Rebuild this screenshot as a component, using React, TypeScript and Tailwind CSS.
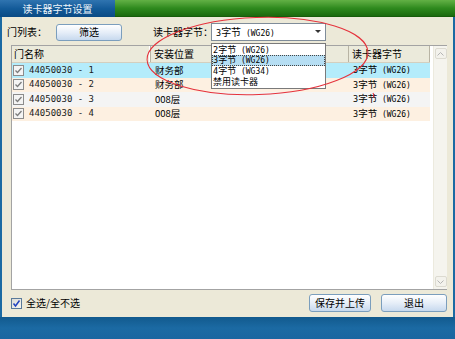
import React from "react";

const cjk = { fontFamily: '"Noto Sans CJK SC", "Liberation Sans", sans-serif' };
const mono = { fontFamily: '"DejaVu Sans Mono", "Liberation Mono", monospace' };

function RowCheck() {
  return (
    <div className="w-[11px] h-[11px] border border-[#8c8c8c] bg-[#f4f4f4] flex items-center justify-center">
      <svg width="9" height="9" viewBox="0 0 9 9">
        <path d="M1.5 4.5 L3.5 6.5 L7.5 2" fill="none" stroke="#7c7c7c" strokeWidth="1.3" />
      </svg>
    </div>
  );
}

function Wg({ d, n }: { d: string; n: string }) {
  return (
    <span className="whitespace-pre leading-none">
      <span className="text-[8.5px] leading-none" style={mono}>{d}</span>字节<span className="text-[8px] leading-none" style={mono}> (WG{n})</span>
    </span>
  );
}

const rows = [
  { name: "44050030 - 1", loc: "财务部", bg: "bg-[#b4ecfb]" },
  { name: "44050030 - 2", loc: "财务部", bg: "bg-[#fdf0e1]" },
  { name: "44050030 - 3", loc: "008层", bg: "bg-[#f4f4f4]" },
  { name: "44050030 - 4", loc: "008层", bg: "bg-[#fdf0e1]" },
];

export default function App() {
  return (
    <div
      className="relative w-[455px] h-[339px] overflow-hidden bg-[#ece9d8] flex flex-col text-black"
      style={cjk}
    >
      {/* top bar */}
      <div className="h-[17px] flex shrink-0">
        <div className="w-[115px] bg-gradient-to-b from-[#2f74b0] via-[#135b99] to-[#0a4a84] text-[#eef4fa] text-[10px] leading-none flex items-center justify-center">
          读卡器字节设置
        </div>
        <div className="flex-1 bg-gradient-to-b from-[#62b145] via-[#2f8b1e] to-[#1b6a0e] border-b border-[#175c0a]" />
      </div>

      {/* body */}
      <div className="flex-1 flex flex-col border-l-2 border-r-2 border-[#1b6aa3] pl-[5px] pr-[6px]">
        {/* toolbar */}
        <div className="mt-[6px] h-[18px] flex items-center text-[10px] leading-none whitespace-nowrap">
          <div className="w-[49px] shrink-0">门列表：</div>
          <button className="w-[66px] h-[17px] shrink-0 rounded-[3px] border border-[#7b9ebd] bg-gradient-to-b from-[#ffffff] via-[#e6eef8] to-[#c7d9ee] text-[10px] leading-none flex items-center justify-center">
            筛选
          </button>
          <div className="ml-[31px] w-[58px] shrink-0 overflow-visible">读卡器字节：</div>
          <div className="w-[115px] h-[18px] shrink-0 border border-[#7f8c99] bg-white flex items-center pl-[4px] pr-[4px]">
            <span className="flex-1 text-[10px]"><Wg d="3" n="26" /></span>
            <svg width="6" height="4" viewBox="0 0 6 4">
              <path d="M0 0 L6 0 L3 3 Z" fill="#333" />
            </svg>
          </div>
        </div>

        {/* table */}
        <div className="mt-[4px] ml-[4px] h-[245px] flex border-l border-t border-b border-[#a3a3a3] bg-white">
          <div className="flex-1 flex flex-col">
            <div className="h-[17px] flex text-[10px] leading-none bg-[#ebeadb] border-b border-[#d3cfbf] w-[418px]">
              <div className="w-[139px] flex items-center pl-[2px] border-r border-[#b8b4a4] shadow-[inset_-1px_0_0_#ffffff]">门名称</div>
              <div className="w-[198px] flex items-center pl-[3px] border-r border-[#b8b4a4]">安装位置</div>
              <div className="w-[81px] flex items-center pl-[3px] border-r border-[#b8b4a4]">读卡器字节</div>
            </div>
            {rows.map((r) => (
              <div key={r.name} className={`h-[14.5px] w-[418px] flex items-center text-[9.5px] leading-none ${r.bg}`}>
                <div className="w-[139px] flex items-center pl-[1px]">
                  <RowCheck />
                  <span className="ml-[5px] whitespace-pre text-[9px] text-[#222]" style={mono}>{r.name}</span>
                </div>
                <div className="w-[198px] pl-[4px]">{r.loc}</div>
                <div className="w-[81px] pl-[4px]"><Wg d="3" n="26" /></div>
              </div>
            ))}
          </div>
          {/* scrollbar */}
          <div className="w-[14px] bg-[#f5f4ee] border-l border-[#eceade] flex flex-col justify-between py-[2px] items-center">
            <div className="w-[12px] h-[11px] rounded-[2px] border border-[#dcdad0] bg-[#f3f2ec] flex items-center justify-center">
              <svg width="7" height="4" viewBox="0 0 7 4"><path d="M0.5 3.5 L3.5 0.5 L6.5 3.5" fill="none" stroke="#b4b4b4" strokeWidth="1" /></svg>
            </div>
            <div className="w-[12px] h-[11px] rounded-[2px] border border-[#dcdad0] bg-[#f3f2ec] flex items-center justify-center">
              <svg width="7" height="4" viewBox="0 0 7 4"><path d="M0.5 0.5 L3.5 3.5 L6.5 0.5" fill="none" stroke="#b4b4b4" strokeWidth="1" /></svg>
            </div>
          </div>
        </div>

        {/* bottom row */}
        <div className="mt-[4px] h-[18px] flex items-center text-[10px] leading-none">
          <div className="ml-[4px] w-[11px] h-[11px] border border-[#5a7a9a] bg-gradient-to-br from-[#dcdcd6] to-[#f6f6f2] flex items-center justify-center">
            <svg width="9" height="9" viewBox="0 0 9 9">
              <path d="M1.5 4.5 L3.5 7 L7.5 1.5" fill="none" stroke="#2142c0" strokeWidth="1.5" />
            </svg>
          </div>
          <div className="ml-[4px]">全选/全不选</div>
          <div className="flex-1" />
          <button className="w-[62px] h-[18px] rounded-[3px] border border-[#7b9ebd] bg-gradient-to-b from-[#ffffff] via-[#e6eef8] to-[#c7d9ee] text-[10px] leading-none flex items-center justify-center">
            保存并上传
          </button>
          <button className="ml-[10px] w-[66px] h-[18px] rounded-[3px] border border-[#7b9ebd] bg-gradient-to-b from-[#ffffff] via-[#e6eef8] to-[#c7d9ee] text-[10px] leading-none flex items-center justify-center">
            退出
          </button>
        </div>
      </div>

      {/* bottom bar */}
      <div className="h-[22px] shrink-0 bg-gradient-to-b from-[#125a8e] via-[#1b6aa3] to-[#1a66a0]" />

      {/* dropdown list */}
      <div className="absolute left-[211px] top-[43px] w-[115px] h-[46px] border border-[#7a7a7a] bg-white text-[9px] leading-none pt-[0.5px]">
        <div className="h-[10.5px] flex items-center pl-[1px]"><Wg d="2" n="26" /></div>
        <div className="h-[10.5px] flex items-center pl-[1px] bg-[#b6def3] outline-1 outline-dotted outline-[#444] -outline-offset-1"><Wg d="3" n="26" /></div>
        <div className="h-[10.5px] flex items-center pl-[1px]"><Wg d="4" n="34" /></div>
        <div className="h-[10.5px] flex items-center pl-[1px]">禁用读卡器</div>
      </div>

      {/* red annotation */}
      <svg className="absolute left-0 top-0 pointer-events-none" width="455" height="339" viewBox="0 0 455 339">
        <ellipse cx="257.5" cy="56" rx="110.5" ry="38.5" transform="rotate(-2 257.5 56)" fill="none" stroke="#e5323c" strokeWidth="1" />
        <path d="M373 93 Q374.5 95 373.5 97.5" fill="none" stroke="#e5323c" strokeWidth="1.2" />
      </svg>
    </div>
  );
}
